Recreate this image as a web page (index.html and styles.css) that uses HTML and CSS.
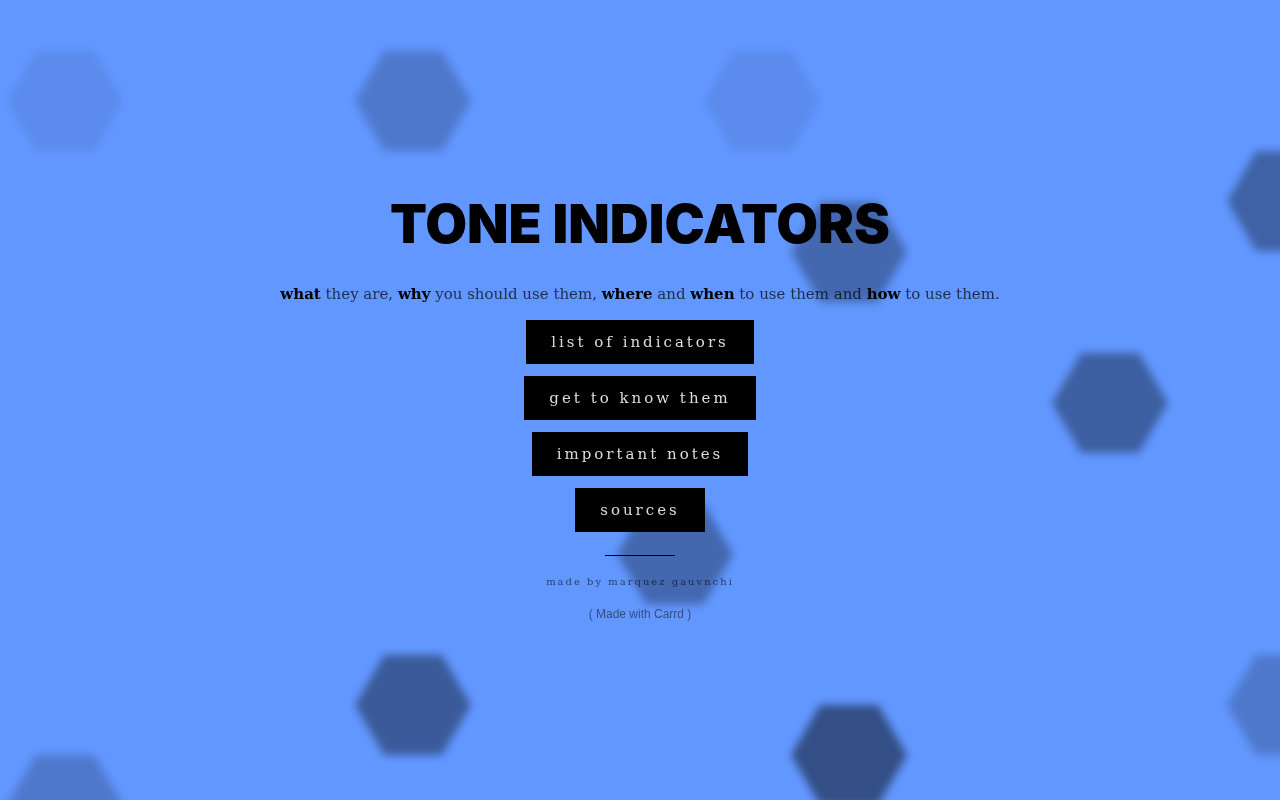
FILE: index.html
```
<!DOCTYPE html>
<html lang="en">
<head>
  <meta charset="UTF-8" />
  <meta name="viewport" content="width=device-width, initial-scale=1.0" />
  <title>Tone Indicators</title>
  <link rel="stylesheet" href="styles.css">
</head>
<body>
  <svg class="background" aria-hidden="true">
    <defs>
      <filter id="soften" x="-20%" y="-20%" width="140%" height="140%">
        <feGaussianBlur stdDeviation="4" />
      </filter>
      <polygon id="hex" points="-58,0 -29,-50 29,-50 58,0 29,50 -29,50" filter="url(#soften)" />
    </defs>
    <use href="#hex" x="65" y="101" opacity="0.07" />
    <use href="#hex" x="413" y="101" opacity="0.2" />
    <use href="#hex" x="762" y="101" opacity="0.07" />
    <use href="#hex" x="1285" y="201" opacity="0.35" />
    <use href="#hex" x="849" y="252" opacity="0.31" />
    <use href="#hex" x="1110" y="403" opacity="0.37" />
    <use href="#hex" x="675" y="554" opacity="0.31" />
    <use href="#hex" x="413" y="705" opacity="0.4" />
    <use href="#hex" x="1285" y="705" opacity="0.2" />
    <use href="#hex" x="849" y="755" opacity="0.48" />
    <use href="#hex" x="65" y="805" opacity="0.2" />
  </svg>

  <main class="wrapper">
    <h1>TONE INDICATORS</h1>

    <p class="intro"><strong>what</strong> they are, <strong>why</strong> you should use them, <strong>where</strong> and <strong>when</strong> to use them and <strong>how</strong> to use them.</p>

    <nav class="buttons">
      <a href="#list" class="button">list of indicators</a>
      <a href="#know" class="button">get to know them</a>
      <a href="#notes" class="button">important notes</a>
      <a href="#sources" class="button">sources</a>
    </nav>

    <hr class="divider">

    <p class="author">made by marquez gauvnchi</p>
    <p class="credits"><a href="https://carrd.co">( Made with Carrd )</a></p>
  </main>
</body>
</html>
```
FILE: styles.css
```
* {
  box-sizing: border-box;
  margin: 0;
  padding: 0;
}

body {
  min-height: 100vh;
  display: flex;
  align-items: center;
  justify-content: center;
  background: #6297ff;
  color: #000;
  font-family: "DejaVu Serif", serif;
}

.background {
  position: fixed;
  top: 0;
  left: 0;
  width: 100%;
  height: 100%;
  z-index: -1;
}

.wrapper {
  display: flex;
  flex-direction: column;
  align-items: center;
  padding: 26px 20px 20px;
  text-align: center;
}

h1 {
  font-family: Inter, sans-serif;
  font-size: 54px;
  font-weight: 900;
  line-height: 80px;
}

.intro {
  margin-top: 18px;
  font-size: 15px;
  line-height: 24px;
  color: rgba(0, 0, 0, 0.7);
}

.intro strong {
  color: #000;
}

.buttons {
  display: flex;
  flex-direction: column;
  align-items: center;
  gap: 12px;
  margin-top: 14px;
}

.button {
  padding: 0 25px;
  background: #000;
  color: #ddd;
  font-size: 15px;
  line-height: 44px;
  letter-spacing: 3px;
  text-decoration: none;
}

.divider {
  width: 70px;
  margin-top: 23px;
  border: 0;
  border-top: 1px solid #000;
}

.author {
  margin-top: 18px;
  font-size: 10px;
  line-height: 16px;
  letter-spacing: 2px;
  color: rgba(0, 0, 0, 0.6);
}

.credits {
  margin-top: 16px;
  font-family: "Liberation Sans", Arial, sans-serif;
  font-size: 12px;
  line-height: 16px;
}

.credits a {
  color: rgba(0, 0, 0, 0.5);
  text-decoration: none;
}
```
